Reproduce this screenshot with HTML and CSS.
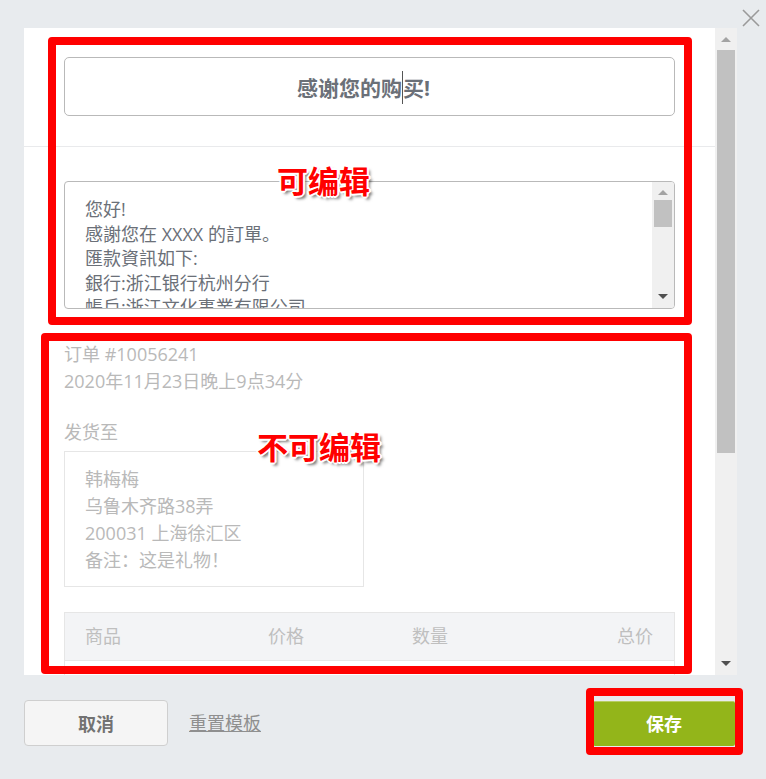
FILE: index.html
```html
<!DOCTYPE html>
<html lang="zh-cn">
<head>
  <meta charset="UTF-8">
  <meta name="viewport" content="width=device-width, initial-scale=1.0">
  <title>编辑邮件模板</title>
  <link rel="stylesheet" href="styles.css">
</head>
<body>
  <button class="close-button" aria-label="关闭">
    <svg width="18" height="18" viewBox="0 0 18 18"><path d="M1 1L17 17M17 1L1 17" stroke="#9a9a9a" stroke-width="1.6" fill="none"/></svg>
  </button>

  <div class="dialog">
    <div class="content">
      <div class="subject-section">
        <div class="subject-input">感谢您的购<span class="caret"></span>买!</div>
      </div>

      <div class="body-section">
        <div class="message-box">
          <div class="message-text">
            您好!<br>
            感謝您在 XXXX 的訂單。<br>
            匯款資訊如下:<br>
            銀行:浙江银行杭州分行<br>
            帳戶:浙江文化事業有限公司
          </div>
          <div class="scrollbar small">
            <span class="arrow up"></span>
            <span class="thumb"></span>
            <span class="arrow down"></span>
          </div>
        </div>

        <div class="order-info">
          <p>订单 #10056241</p>
          <p>2020年11月23日晚上9点34分</p>
          <p class="ship-label">发货至</p>
        </div>

        <div class="address-box">
          <p>韩梅梅</p>
          <p>乌鲁木齐路38弄</p>
          <p>200031 上海徐汇区</p>
          <p>备注：这是礼物！</p>
        </div>

        <div class="items-table">
          <div class="items-head">
            <span>商品</span>
            <span>价格</span>
            <span>数量</span>
            <span class="total">总价</span>
          </div>
          <div class="items-row"></div>
        </div>
      </div>
    </div>

    <div class="scrollbar main">
      <span class="arrow up"></span>
      <span class="thumb"></span>
      <span class="arrow down"></span>
    </div>
  </div>

  <div class="footer">
    <div class="footer-left">
      <button class="cancel-button">取消</button>
      <a class="reset-link" href="#">重置模板</a>
    </div>
    <button class="save-button">保存</button>
  </div>

  <!-- 标注 -->
  <div class="mark mark-editable"></div>
  <div class="mark mark-readonly"></div>
  <div class="mark mark-save"></div>
  <span class="mark-label label-editable">可编辑</span>
  <span class="mark-label label-readonly">不可编辑</span>
</body>
</html>
```

FILE: styles.css
```css
body {
  margin: 0;
  padding: 28px 0 0;
  background-color: #e8ebee;
  font-family: "Open Sans", "Noto Sans CJK SC", sans-serif;
  position: relative;
  height: 751px;
  overflow: hidden;
}

p {
  margin: 0;
}

.close-button {
  position: absolute;
  top: 9px;
  right: 6px;
  width: 18px;
  height: 18px;
  padding: 0;
  border: none;
  background: none;
}

.close-button svg {
  display: block;
}

.dialog {
  display: flex;
  width: 713px;
  height: 647px;
  margin-left: 24px;
  background-color: #fff;
}

.content {
  flex: 1;
  overflow: hidden;
}

.subject-section {
  padding: 29px 40px 30px;
  border-bottom: 1px solid #e9eaec;
}

.subject-input {
  height: 59px;
  box-sizing: border-box;
  border: 1px solid #b9b9b9;
  border-radius: 5px;
  display: flex;
  align-items: center;
  justify-content: center;
  font-size: 21px;
  font-weight: bold;
  color: #6b7078;
  padding: 0 12px 0 0;
}

.caret {
  display: inline-block;
  width: 0;
  height: 33px;
  border-left: 1px solid #555;
  margin-top: 2px;
}

.body-section {
  padding: 34px 40px 0;
}

.message-box {
  display: flex;
  height: 128px;
  box-sizing: border-box;
  border: 1px solid #b9b9b9;
  border-radius: 4px;
  overflow: hidden;
}

.message-text {
  flex: 1;
  padding: 15px 20px 0;
  font-size: 18px;
  line-height: 24.5px;
  color: #6b7078;
  overflow: hidden;
  white-space: nowrap;
}

.scrollbar {
  display: flex;
  flex-direction: column;
  align-items: center;
  background-color: #f0f0f0;
  width: 22px;
}

.scrollbar .arrow {
  width: 0;
  height: 0;
  border-left: 5px solid transparent;
  border-right: 5px solid transparent;
}

.scrollbar .up {
  border-bottom: 5px solid #a3a3a3;
}

.scrollbar .down {
  border-top: 5px solid #505050;
}

.scrollbar .thumb {
  width: 18px;
  background-color: #c1c1c1;
}

.scrollbar.small {
  padding: 8px 0 9px;
}

.scrollbar.small .thumb {
  height: 27px;
  margin: 5px 0 auto;
}

.scrollbar.main {
  padding: 9px 0 9px;
}

.scrollbar.main .thumb {
  height: 403px;
  margin: 8px 0 auto;
}

.order-info {
  margin-top: 32px;
  font-size: 18px;
  line-height: 27px;
  color: #b9b9b9;
}

.order-info .ship-label {
  margin-top: 24px;
}

.address-box {
  width: 300px;
  box-sizing: border-box;
  margin-top: 5px;
  padding: 14px 20px 12px;
  border: 1px solid #e6e6e6;
  font-size: 18px;
  line-height: 27px;
  color: #b9b9b9;
}

.items-table {
  margin-top: 25px;
  border: 1px solid #e6e6e6;
}

.items-head {
  display: grid;
  grid-template-columns: 183px 144px 1fr auto;
  align-items: center;
  height: 48px;
  padding: 0 21px 3px 20px;
  box-sizing: border-box;
  background-color: #f3f4f6;
  border-bottom: 1px solid #e6e6e6;
  font-size: 18px;
  color: #bfbfbf;
}

.items-row {
  height: 40px;
}

.footer {
  display: flex;
  justify-content: space-between;
  align-items: center;
  width: 711px;
  margin: 25px 0 0 24px;
}

.footer-left {
  display: flex;
  align-items: center;
  gap: 21px;
}

.cancel-button {
  width: 144px;
  height: 46px;
  background-color: #f5f5f5;
  border: 1px solid #cfcfcf;
  border-radius: 4px;
  font-family: inherit;
  font-size: 18px;
  font-weight: bold;
  color: #727272;
  padding-bottom: 2px;
}

.reset-link {
  font-size: 18px;
  color: #8f8f8f;
  text-decoration: underline;
  margin-bottom: 2px;
}

.save-button {
  width: 142px;
  height: 45px;
  background-color: #93b51a;
  border: none;
  border-top: 1px solid #b7cd62;
  border-radius: 2px;
  font-family: inherit;
  font-size: 18px;
  font-weight: bold;
  color: #fff;
  padding-bottom: 3px;
}

/* 标注框 */
.mark {
  position: absolute;
  border: 8px solid #ff0000;
  border-radius: 4px;
  box-sizing: border-box;
}

.mark-editable {
  left: 48px;
  top: 37px;
  width: 644px;
  height: 288px;
}

.mark-readonly {
  left: 41px;
  top: 333px;
  width: 651px;
  height: 341px;
}

.mark-save {
  left: 586px;
  top: 688px;
  width: 157px;
  height: 67px;
}

.mark-label {
  position: absolute;
  font-family: "Noto Sans CJK SC", sans-serif;
  font-size: 31px;
  font-weight: bold;
  line-height: 1;
  color: #ff0000;
  text-shadow:
    -1px -1px 0 #fff, 1px -1px 0 #fff, -1px 1px 0 #fff, 1px 1px 0 #fff,
    0 -2px 0 #fff, 0 2px 0 #fff, -2px 0 0 #fff, 2px 0 0 #fff,
    3px 3px 3px rgba(0, 0, 0, 0.55);
}

.label-editable {
  left: 277px;
  top: 164px;
}

.label-readonly {
  left: 257px;
  top: 430px;
}
```
